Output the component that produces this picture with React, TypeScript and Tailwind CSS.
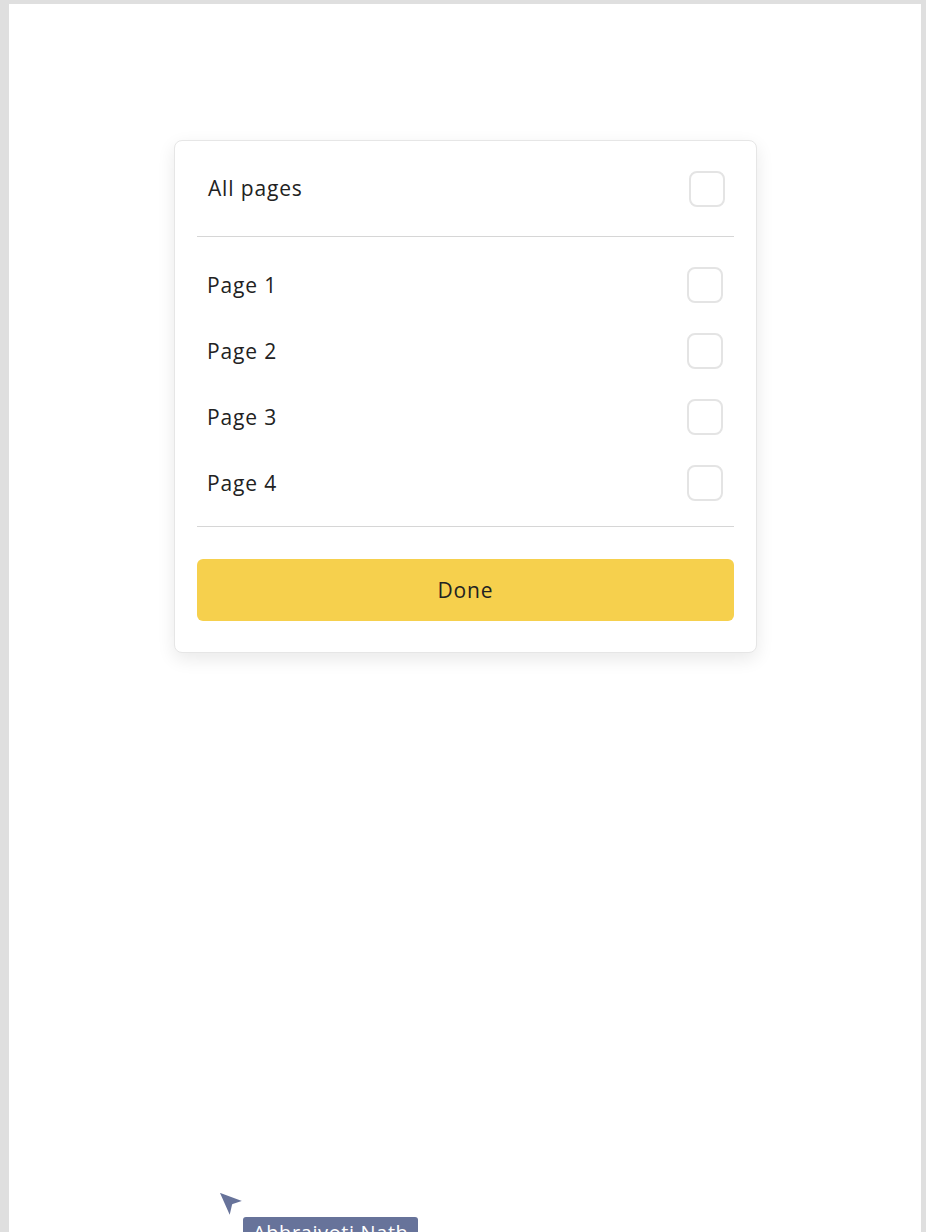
const pages = ['Page 1', 'Page 2', 'Page 3', 'Page 4'];

function Box() {
  return <span className="block w-9 h-9 rounded-lg border-2 border-[#e4e4e4] bg-white shrink-0" />;
}

export default function App() {
  return (
    <div className="bg-[#dfdfdf] h-[1232px] pl-[9px] pr-[5px] pt-[4px] overflow-hidden font-['Open_Sans',sans-serif]">
      <div className="relative bg-white h-full pt-[136px] pl-[165px]">
        {/* Page selector card */}
        <div className="w-[583px] bg-white border border-[#e6e6e6] rounded-lg shadow-[0_6px_18px_rgba(0,0,0,0.09)] px-[22px] pt-[30px] pb-[31px]">
          <div className="flex items-center justify-between pl-[11px] pr-[9px] h-9">
            <span className="text-[21px] tracking-[0.04em] text-[#222]">All pages</span>
            <Box />
          </div>
          <div className="mt-[29px] h-px bg-[#d6d6d6]" />
          <div className="flex flex-col gap-[30px] pt-[30px] pb-[25px]">
            {pages.map((p) => (
              <div key={p} className="flex items-center justify-between pl-[10px] pr-[11px] h-9">
                <span className="text-[21px] tracking-[0.04em] text-[#222] pt-px">{p}</span>
                <Box />
              </div>
            ))}
          </div>
          <div className="h-px bg-[#d6d6d6]" />
          <button className="mt-[32px] w-full h-[62px] rounded-md bg-[#f6d04d] text-[21px] tracking-[0.04em] text-[#222] pt-[2px]">
            Done
          </button>
        </div>

        {/* Collaborator cursor */}
        <svg className="absolute left-[205px] top-[1181px]" width="40" height="40" viewBox="0 0 40 40">
          <path
            d="M4 6 L31 16 L19 20 L16 33 Z"
            fill="#67739a"
            stroke="white"
            strokeWidth="2"
            strokeLinejoin="round"
          />
        </svg>
        <div className="absolute left-[234px] top-[1213px] bg-[#67739a] rounded-[3px] px-[10px] pt-[3px] text-white text-[20px] leading-[26px] font-medium tracking-[0.03em] whitespace-nowrap">
          Abhrajyoti Nath
        </div>
      </div>
    </div>
  );
}
